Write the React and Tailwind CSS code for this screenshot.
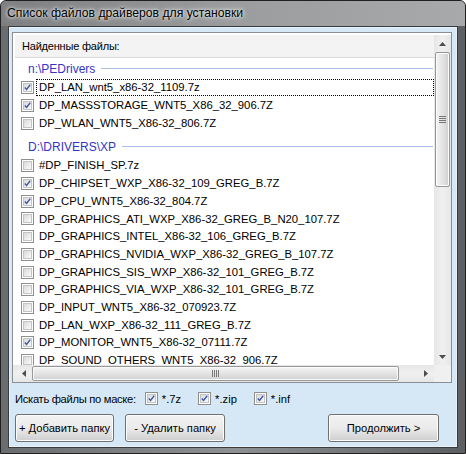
import React from "react";

const groups = [
  {
    name: "n:\\PEDrivers",
    items: [
      ["DP_LAN_wnt5_x86-32_1109.7z", true, true],
      ["DP_MASSSTORAGE_WNT5_X86_32_906.7Z", true],
      ["DP_WLAN_WNT5_X86-32_806.7Z", false],
    ],
  },
  {
    name: "D:\\DRIVERS\\XP",
    items: [
      ["#DP_FINISH_SP.7z", false],
      ["DP_CHIPSET_WXP_X86-32_109_GREG_B.7Z", true],
      ["DP_CPU_WNT5_X86-32_804.7Z", true],
      ["DP_GRAPHICS_ATI_WXP_X86-32_GREG_B_N20_107.7Z", false],
      ["DP_GRAPHICS_INTEL_X86-32_106_GREG_B.7Z", false],
      ["DP_GRAPHICS_NVIDIA_WXP_X86-32_GREG_B_107.7Z", false],
      ["DP_GRAPHICS_SIS_WXP_X86-32_101_GREG_B.7Z", false],
      ["DP_GRAPHICS_VIA_WXP_X86-32_101_GREG_B.7Z", false],
      ["DP_INPUT_WNT5_X86-32_070923.7Z", false],
      ["DP_LAN_WXP_X86-32_111_GREG_B.7Z", false],
      ["DP_MONITOR_WNT5_X86-32_07111.7Z", true],
      ["DP_SOUND_OTHERS_WNT5_X86-32_906.7Z", false],
    ],
  },
];

function Check({ checked }) {
  return (
    <div className="w-[13px] h-[13px] shrink-0 border border-[#8e8f8f] bg-white p-px">
      <div className="w-full h-full border border-[#c4c4c4] bg-gradient-to-br from-[#d9d9d9] to-[#fbfbfb] flex items-center justify-center">
        {checked && (
          <svg width="9" height="9" viewBox="0 0 9 9">
            <path d="M1 4.5 L3.3 7 L8 1" fill="none" stroke="#3c5aa8" strokeWidth="1.8" />
          </svg>
        )}
      </div>
    </div>
  );
}

function Button({ children, className }) {
  return (
    <div
      className={
        "h-[28px] border border-[#707070] rounded-[3px] bg-gradient-to-b from-[#f2f2f2] via-[#ebebeb] to-[#cfcfcf] shadow-[inset_0_0_0_1px_#fcfcfc] flex items-center justify-center text-[11.2px] text-black whitespace-nowrap " +
        className
      }
    >
      {children}
    </div>
  );
}

function Arrow({ dir }) {
  const d = {
    up: "M0 4 L3.5 0 L7 4 Z",
    down: "M0 0 L7 0 L3.5 4 Z",
    left: "M4 0 L4 7 L0 3.5 Z",
    right: "M0 0 L4 3.5 L0 7 Z",
  }[dir];
  const w = dir === "up" || dir === "down" ? 7 : 4;
  const h = dir === "up" || dir === "down" ? 4 : 7;
  return (
    <svg width={w} height={h} viewBox={`0 0 ${w} ${h}`}>
      <path d={d} fill="#4d4d4d" />
    </svg>
  );
}

export default function App() {
  return (
    <div
      className="w-[466px] h-[454px] flex flex-col bg-gradient-to-r from-[#6a6d70] via-[#8e9194] to-[#5d6063] border border-[#202020] rounded-t-[6px] overflow-hidden"
      style={{ fontFamily: '"Liberation Sans", Arial, sans-serif' }}
    >
      <div className="h-[25px] shrink-0 flex items-center pl-[6px] bg-gradient-to-r from-[#7d7f81] via-[#9a9c9e] to-[#a7a9aa]">
        <span className="text-[12.2px] text-black [text-shadow:0_0_6px_#ffffff,0_0_3px_#ffffff]">
          Список файлов драйверов для установки
        </span>
      </div>
      <div className="flex-1 mx-[7px] mb-[7px] border border-[#3b3b3b] flex flex-col">
        <div className="flex-1 bg-[#d6e8f6] border border-[#e6f1fa] flex flex-col pt-[4px] pl-[2px] pr-[4px] pb-[4px]">
          {/* list box */}
          <div className="h-[351px] shrink-0 border border-[#8a8f96] bg-white flex flex-col">
            <div className="flex-1 flex min-h-0 border-[2px] border-white border-r-0 border-b-0">
              <div className="flex-1 min-w-0 overflow-hidden">
                <div className="h-[23px] bg-[#f3f3f3] border-b border-[#dadada] flex items-center pl-[7px] text-[11px] tracking-[-0.2px] text-black">
                  Найденные файлы:
                </div>
                {groups.map((g, gi) => (
                  <div key={g.name} className={gi > 0 ? "mt-[4px]" : ""}>
                    <div className="h-[21px] flex items-center pl-[13px] pr-[1px]">
                      <span className="text-[12px] text-[#3434c6] whitespace-nowrap">{g.name}</span>
                      <div className="flex-1 h-px bg-[#aac0e4] ml-[6px]" />
                    </div>
                    {g.items.map(([name, checked, focus]) => (
                      <div key={name} className="h-[17.7px] flex items-center pl-[6px]">
                        <Check checked={checked} />
                        <div
                          className={
                            "flex-1 ml-[2px] h-[17px] flex items-center pl-[2px] text-[11.3px] text-black whitespace-nowrap " +
                            (focus ? "border border-dotted border-black" : "border border-transparent")
                          }
                        >
                          {name}
                        </div>
                      </div>
                    ))}
                  </div>
                ))}
              </div>
              {/* vertical scrollbar */}
              <div className="w-[17px] shrink-0 bg-gradient-to-r from-[#e6e6e6] via-[#f0f0f0] to-[#e6e6e6] flex flex-col">
                <div className="h-[17px] flex items-center justify-center">
                  <Arrow dir="up" />
                </div>
                <div className="h-[135px] mx-px border border-[#979797] rounded-[2px] bg-gradient-to-r from-[#f4f4f4] via-[#e4e4e4] to-[#cfcfcf] shadow-[inset_0_0_0_1px_#fbfbfb] flex items-center justify-center">
                  <div className="flex flex-col gap-px">
                    <div className="w-[7px] h-px bg-[#777]" />
                    <div className="w-[7px] h-px bg-[#777]" />
                    <div className="w-[7px] h-px bg-[#777]" />
                    <div className="w-[7px] h-px bg-[#777]" />
                  </div>
                </div>
                <div className="flex-1" />
                <div className="h-[17px] flex items-center justify-center">
                  <Arrow dir="down" />
                </div>
              </div>
            </div>
            {/* horizontal scrollbar */}
            <div className="h-[17px] shrink-0 flex">
              <div className="flex-1 flex bg-gradient-to-b from-[#e6e6e6] via-[#f0f0f0] to-[#e6e6e6] pl-[2px]">
                <div className="w-[17px] flex items-center justify-center">
                  <Arrow dir="left" />
                </div>
                <div className="w-[367px] my-px border border-[#979797] rounded-[2px] bg-gradient-to-b from-[#f4f4f4] via-[#e4e4e4] to-[#cfcfcf] shadow-[inset_0_0_0_1px_#fbfbfb] flex items-center justify-center">
                  <div className="flex gap-px">
                    <div className="w-px h-[7px] bg-[#777]" />
                    <div className="w-px h-[7px] bg-[#777]" />
                    <div className="w-px h-[7px] bg-[#777]" />
                    <div className="w-px h-[7px] bg-[#777]" />
                  </div>
                </div>
                <div className="flex-1" />
                <div className="w-[17px] flex items-center justify-center">
                  <Arrow dir="right" />
                </div>
              </div>
              <div className="w-[17px] bg-[#f0f0f0]" />
            </div>
          </div>
          {/* mask row */}
          <div className="h-[31px] pt-[1px] shrink-0 flex items-center pl-[3px] text-[11.2px] text-black">
            <span className="tracking-[-0.3px]">Искать файлы по маске:</span>
            <div className="ml-[9px] flex items-center">
              <Check checked />
              <span className="ml-[4px]">*.7z</span>
            </div>
            <div className="ml-[17px] flex items-center">
              <Check checked />
              <span className="ml-[4px]">*.zip</span>
            </div>
            <div className="ml-[17px] flex items-center">
              <Check checked />
              <span className="ml-[4px]">*.inf</span>
            </div>
          </div>
          {/* buttons */}
          <div className="flex items-center pl-[3px]">
            <Button className="w-[99px]">+ Добавить папку</Button>
            <Button className="w-[100px] ml-[11px]">- Удалить папку</Button>
            <div className="flex-1" />
            <Button className="w-[111px] mr-[13px]">Продолжить &gt;</Button>
          </div>
        </div>
      </div>
    </div>
  );
}
